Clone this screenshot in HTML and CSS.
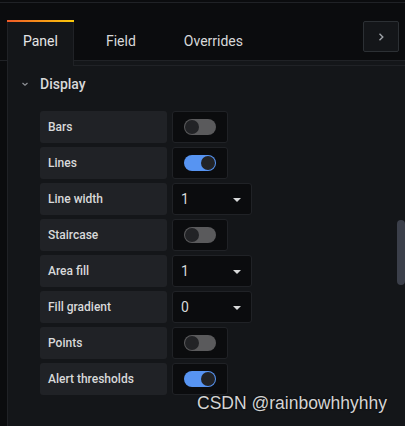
FILE: index.html
```html
<!DOCTYPE html>
<html lang="en">
<head>
  <meta charset="UTF-8">
  <title>Panel options</title>
  <link rel="stylesheet" href="styles.css">
</head>
<body>
  <div class="topline"></div>

  <div class="tabbar">
    <div class="tab active">Panel</div>
    <div class="tab">Field</div>
    <div class="tab">Overrides</div>
    <div class="collapse-btn">
      <svg width="10" height="10" viewBox="0 0 10 10"><path d="M3.5 1.8 L6.8 5 L3.5 8.2" fill="none" stroke="#9fa3a8" stroke-width="1.4"/></svg>
    </div>
  </div>

  <div class="content">
    <div class="group">
      <div class="group-header">
        <svg class="chev" width="10" height="10" viewBox="0 0 10 10"><path d="M2.5 4 L5 6.3 L7.5 4" fill="none" stroke="#8e9196" stroke-width="1.2"/></svg>
        <span>Display</span>
      </div>

      <div class="rows">
        <div class="row">
          <div class="label">Bars</div>
          <div class="ctrl toggle-box"><div class="switch"></div></div>
        </div>
        <div class="row">
          <div class="label">Lines</div>
          <div class="ctrl toggle-box"><div class="switch on"></div></div>
        </div>
        <div class="row">
          <div class="label">Line width</div>
          <div class="ctrl select">1<span class="caret"></span></div>
        </div>
        <div class="row">
          <div class="label">Staircase</div>
          <div class="ctrl toggle-box"><div class="switch"></div></div>
        </div>
        <div class="row">
          <div class="label">Area fill</div>
          <div class="ctrl select">1<span class="caret"></span></div>
        </div>
        <div class="row">
          <div class="label">Fill gradient</div>
          <div class="ctrl select">0<span class="caret"></span></div>
        </div>
        <div class="row">
          <div class="label">Points</div>
          <div class="ctrl toggle-box"><div class="switch"></div></div>
        </div>
        <div class="row">
          <div class="label">Alert thresholds</div>
          <div class="ctrl toggle-box"><div class="switch on"></div></div>
        </div>
      </div>
    </div>
    <div class="scrollbar"></div>
  </div>

  <div class="watermark">CSDN @rainbowhhyhhy</div>
</body>
</html>
```

FILE: styles.css
```css
body {
  margin: 0;
  background: #0b0c0e;
  font-family: Roboto, "Noto Sans", sans-serif;
  color: #d8d9da;
  height: 426px;
  overflow: hidden;
  position: relative;
}
.topline {
  margin-top: 2px;
  height: 1px;
  background: #202226;
}
.tabbar {
  display: flex;
  align-items: flex-start;
  gap: 16px;
  margin-top: 17px;
  padding-left: 7px;
  height: 40px;
  border-bottom: 1px solid #202226;
}
.tab {
  height: 40px;
  padding: 0 15px;
  border-left: 1px solid transparent;
  border-right: 1px solid transparent;
  font-size: 14px;
  line-height: 42px;
  color: #d8d9da;
}
.tab.active {
  position: relative;
  height: 46px;
  background: #141619;
  border-left-color: #202226;
  border-right-color: #202226;
  color: #e4e5e6;
  z-index: 1;
}
.tab.active::before {
  content: "";
  position: absolute;
  top: 0;
  left: -1px;
  right: -1px;
  height: 2px;
  background: linear-gradient(90deg, #f05a28, #fbca0a);
}
.collapse-btn {
  margin-left: auto;
  margin-right: 6px;
  margin-top: 1px;
  width: 34px;
  height: 29px;
  border: 1px solid #2c3034;
  border-radius: 2px;
  background: #141619;
  display: flex;
  align-items: center;
  justify-content: center;
}
.content {
  position: relative;
  margin-left: 7px;
  border-left: 1px solid #202226;
  background: #141619;
  padding-top: 4px;
  height: 365px;
}
.group {
  border-top: 1px solid #202226;
}
.group-header {
  display: flex;
  align-items: center;
  height: 36px;
  padding-left: 12px;
  font-size: 14px;
  font-weight: 500;
}
.chev {
  margin-right: 10px;
}
.rows {
  padding: 9px 0 0 32px;
}
.row {
  display: flex;
  gap: 5px;
  margin-bottom: 4px;
}
.label {
  width: 119px;
  height: 32px;
  padding-left: 8px;
  background: #202226;
  border-radius: 3px;
  font-size: 12px;
  font-weight: 500;
  line-height: 32px;
}
.ctrl {
  height: 30px;
  background: #0b0c0e;
  border: 1px solid #202226;
  border-radius: 3px;
}
.toggle-box {
  width: 54px;
  display: flex;
  align-items: center;
  justify-content: center;
}
.switch {
  position: relative;
  width: 32px;
  height: 16px;
  border-radius: 8px;
  background: #5a5a5c;
}
.switch::after {
  content: "";
  position: absolute;
  top: 1px;
  left: 1px;
  width: 14px;
  height: 14px;
  border-radius: 50%;
  background: #222326;
}
.switch.on {
  background: #5794f2;
}
.switch.on::after {
  left: 17px;
}
.select {
  width: 70px;
  padding-left: 8px;
  display: flex;
  align-items: center;
  justify-content: space-between;
  font-size: 14px;
  color: #d8d9da;
}
.caret {
  width: 0;
  height: 0;
  margin-right: 10px;
  margin-top: 2px;
  border-left: 4px solid transparent;
  border-right: 4px solid transparent;
  border-top: 4px solid #d8d9da;
}
.scrollbar {
  position: absolute;
  right: 0;
  top: 159px;
  width: 8px;
  height: 65px;
  border-radius: 4px;
  background: #3b3f4a;
}
.watermark {
  position: absolute;
  left: 197px;
  top: 393px;
  font-family: "Liberation Sans", Arial, sans-serif;
  font-size: 17.5px;
  color: #d4d4d4;
  text-shadow: 0 0 2px #000;
}
```
